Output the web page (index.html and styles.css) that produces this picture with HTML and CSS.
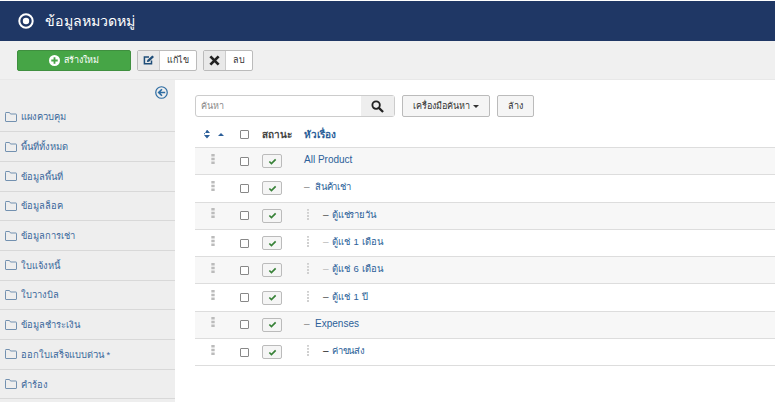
FILE: index.html
```html
<!DOCTYPE html>
<html lang="th">
  <head>
    <meta charset="utf-8" />
    <title>ข้อมูลหมวดหมู่</title>
    <link rel="stylesheet" href="styles.css">
  </head>
  <body>
    <svg width="0" height="0" class="defs">
      <symbol id="folder" viewBox="0 0 12 10"><path d="M.5 1.500V9a.5.5 0 0 0 .5.5h10a.5.5 0 0 0 .5-.5V2.500a.5.5 0 0 0-.5-.5H5.500L4.500.5H1a.5.5 0 0 0-.5.5z" fill="none" stroke="currentColor"/></symbol>
      <symbol id="drag" viewBox="0 0 4 12"><path d="M0 0h4v3H0zM0 4.500h4v3H0zM0 9h4v3H0z" fill="#bbb"/></symbol>
      <symbol id="vdots" viewBox="0 0 2 12"><path d="M0 0h2v2H0zM0 3.300h2v2H0zM0 6.600h2v2H0zM0 9.900h2v2H0z" fill="#ccc"/></symbol>
      <symbol id="check" viewBox="0 0 12 10"><path d="M1.500 5l3 3 6-6" fill="none" stroke="#378137" stroke-width="2.400"/></symbol>
    </svg>

    <header class="title-bar">
      <svg class="title-icon" viewBox="0 0 16 16" width="16" height="16"><circle cx="8" cy="8" r="6.700" fill="none" stroke="#fff" stroke-width="2"/><circle cx="8" cy="8" r="3.200" fill="#fff"/></svg>
      <h1>ข้อมูลหมวดหมู่</h1>
    </header>

    <div class="toolbar">
      <button class="btn-new">
        <svg viewBox="0 0 12 12" width="11" height="11"><circle cx="6" cy="6" r="6" fill="#fff"/><path d="M6 2.500v7M2.500 6h7" stroke="#46a546" stroke-width="2"/></svg>
        สร้างใหม่
      </button>
      <button class="btn-split btn-edit">
        <span class="btn-icon">
          <svg viewBox="0 0 14 12" width="12" height="10"><path d="M10 6.500V10.500H1.500V2.500H7" fill="none" stroke="#1f4e79" stroke-width="1.800"/><path d="M5 6l6-5.500 2 2-6 5.500-2.500.5z" fill="#1f4e79"/></svg>
        </span>
        <span class="btn-label">แก้ไข</span>
      </button>
      <button class="btn-split btn-delete">
        <span class="btn-icon">
          <svg viewBox="0 0 12 12" width="11" height="11"><path d="M1.500 1.500l9 9M10.500 1.500l-9 9" stroke="#222" stroke-width="3"/></svg>
        </span>
        <span class="btn-label">ลบ</span>
      </button>
    </div>

    <div class="main">
      <nav class="sidebar">
        <div class="collapse">
          <svg viewBox="0 0 14 14" width="13" height="13"><circle cx="7" cy="7" r="6.200" fill="none" stroke="#2d6ca2" stroke-width="1.300"/><path d="M7.500 3.500L4 7l3.500 3.500M4 7h7" fill="none" stroke="#2d6ca2" stroke-width="1.800"/></svg>
        </div>
        <a class="nav-item"><svg class="folder"><use href="#folder"/></svg>แผงควบคุม</a>
        <a class="nav-item"><svg class="folder"><use href="#folder"/></svg>พื้นที่ทั้งหมด</a>
        <a class="nav-item"><svg class="folder"><use href="#folder"/></svg>ข้อมูลพื้นที่</a>
        <a class="nav-item"><svg class="folder"><use href="#folder"/></svg>ข้อมูลล็อค</a>
        <a class="nav-item"><svg class="folder"><use href="#folder"/></svg>ข้อมูลการเช่า</a>
        <a class="nav-item"><svg class="folder"><use href="#folder"/></svg>ใบแจ้งหนี้</a>
        <a class="nav-item"><svg class="folder"><use href="#folder"/></svg>ใบวางบิล</a>
        <a class="nav-item"><svg class="folder"><use href="#folder"/></svg>ข้อมูลชำระเงิน</a>
        <a class="nav-item"><svg class="folder"><use href="#folder"/></svg>ออกใบเสร็จแบบด่วน *</a>
        <a class="nav-item"><svg class="folder"><use href="#folder"/></svg>คำร้อง</a>
      </nav>

      <section class="content">
        <div class="filters">
          <div class="search">
            <span class="search-input">ค้นหา</span>
            <span class="search-btn">
              <svg viewBox="0 0 14 14" width="13" height="13"><circle cx="5.500" cy="5.500" r="4" fill="none" stroke="#222" stroke-width="2"/><path d="M8.500 8.500l4.500 4.500" stroke="#222" stroke-width="2.400"/></svg>
            </span>
          </div>
          <button class="btn-plain">เครื่องมือค้นหา <i class="caret"></i></button>
          <button class="btn-plain">ล้าง</button>
        </div>

        <div class="row head">
          <span class="c-order"><i class="sort"></i><i class="sort-up"></i></span>
          <span class="c-check"><i class="box"></i></span>
          <span class="c-status">สถานะ</span>
          <span class="c-title">หัวเรื่อง</span>
        </div>

        <div class="row odd">
          <span class="c-order"><svg class="drag"><use href="#drag"/></svg></span>
          <span class="c-check"><i class="box"></i></span>
          <span class="c-status"><i class="state"><svg><use href="#check"/></svg></i></span>
          <span class="c-title"><a class="latin">All Product</a></span>
        </div>
        <div class="row">
          <span class="c-order"><svg class="drag"><use href="#drag"/></svg></span>
          <span class="c-check"><i class="box"></i></span>
          <span class="c-status"><i class="state"><svg><use href="#check"/></svg></i></span>
          <span class="c-title"><b class="dash">–</b><a>สินค้าเช่า</a></span>
        </div>
        <div class="row odd">
          <span class="c-order"><svg class="drag"><use href="#drag"/></svg></span>
          <span class="c-check"><i class="box"></i></span>
          <span class="c-status"><i class="state"><svg><use href="#check"/></svg></i></span>
          <span class="c-title"><svg class="vdots"><use href="#vdots"/></svg><b class="dash mid">–</b><a>ตู้แช่รายวัน</a></span>
        </div>
        <div class="row">
          <span class="c-order"><svg class="drag"><use href="#drag"/></svg></span>
          <span class="c-check"><i class="box"></i></span>
          <span class="c-status"><i class="state"><svg><use href="#check"/></svg></i></span>
          <span class="c-title"><svg class="vdots"><use href="#vdots"/></svg><b class="dash light">–</b><a class="spaced">ตู้แช่ 1 เดือน</a></span>
        </div>
        <div class="row odd">
          <span class="c-order"><svg class="drag"><use href="#drag"/></svg></span>
          <span class="c-check"><i class="box"></i></span>
          <span class="c-status"><i class="state"><svg><use href="#check"/></svg></i></span>
          <span class="c-title"><svg class="vdots"><use href="#vdots"/></svg><b class="dash light">–</b><a class="spaced">ตู้แช่ 6 เดือน</a></span>
        </div>
        <div class="row">
          <span class="c-order"><svg class="drag"><use href="#drag"/></svg></span>
          <span class="c-check"><i class="box"></i></span>
          <span class="c-status"><i class="state"><svg><use href="#check"/></svg></i></span>
          <span class="c-title"><svg class="vdots"><use href="#vdots"/></svg><b class="dash mid">–</b><a class="spaced">ตู้แช่ 1 ปี</a></span>
        </div>
        <div class="row odd">
          <span class="c-order"><svg class="drag"><use href="#drag"/></svg></span>
          <span class="c-check"><i class="box"></i></span>
          <span class="c-status"><i class="state"><svg><use href="#check"/></svg></i></span>
          <span class="c-title"><b class="dash">–</b><a class="latin">Expenses</a></span>
        </div>
        <div class="row">
          <span class="c-order"><svg class="drag"><use href="#drag"/></svg></span>
          <span class="c-check"><i class="box"></i></span>
          <span class="c-status"><i class="state"><svg><use href="#check"/></svg></i></span>
          <span class="c-title"><svg class="vdots"><use href="#vdots"/></svg><b class="dash dark">–</b><a>ค่าขนส่ง</a></span>
        </div>
      </section>
    </div>
  </body>
</html>
```

FILE: styles.css
```css
html,
body {
  margin: 0;
  height: 100%;
  overflow: hidden;
  background: white;
  font-family: "Liberation Sans", "Noto Sans", sans-serif;
  font-size: 10px;
  color: #333;
}
button {
  font: inherit;
  color: inherit;
  padding: 0;
  cursor: pointer;
}
a {
  color: #2c5f99;
}
.defs {
  position: absolute;
}
.title-bar {
  display: flex;
  align-items: center;
  height: 40px;
  margin-top: 1px;
  padding-left: 18px;
  background: #1f3765;
  color: white;
}
.title-icon {
  margin-right: 11px;
}
h1 {
  margin: 0;
  font-size: 14.200px;
  font-weight: normal;
}
.toolbar {
  display: flex;
  align-items: center;
  gap: 6px;
  height: 39px;
  padding-left: 17px;
  background: #f0f0f0;
  border-bottom: 1px solid #e8e8e8;
  box-sizing: border-box;
}
.btn-new {
  display: flex;
  align-items: center;
  justify-content: center;
  gap: 4px;
  width: 114px;
  height: 21px;
  background: #46a546;
  border: 1px solid #3f8f3f;
  border-radius: 2px;
  color: white;
  font-size: 9px;
}
.btn-split {
  display: flex;
  height: 21px;
  background: white;
  border: 1px solid #bbb;
  border-radius: 2px;
  box-sizing: border-box;
  font-size: 9px;
}
.btn-edit {
  width: 60px;
}
.btn-delete {
  width: 50px;
}
.btn-icon {
  display: flex;
  align-items: center;
  justify-content: center;
  width: 21px;
  background: #e9e9e9;
  border-right: 1px solid #ccc;
}
.btn-label {
  flex: 1;
  display: flex;
  align-items: center;
  justify-content: center;
}
.main {
  display: flex;
  height: 322px;
}
.sidebar {
  width: 175px;
  background: #eee;
  flex: none;
}
.collapse {
  display: flex;
  justify-content: flex-end;
  height: 22.500px;
  padding: 6px 7px 0 0;
  box-sizing: border-box;
}
.nav-item {
  display: flex;
  align-items: center;
  height: 29.700px;
  padding-left: 5px;
  border-bottom: 1px solid #d8d8d8;
  box-sizing: border-box;
  color: #3a689c;
  font-size: 9.400px;
}
.folder {
  width: 12px;
  height: 10px;
  margin-right: 4px;
  color: #7391b0;
}
.content {
  flex: 1;
  padding: 15px 0 0 20px;
  min-width: 0;
}
.filters {
  display: flex;
  gap: 7px;
  height: 22px;
  margin-bottom: 4px;
  font-size: 9px;
}
.search {
  display: flex;
  width: 200px;
  border: 1px solid #ccc;
  border-radius: 3px;
  box-sizing: border-box;
}
.search-input {
  flex: 1;
  padding-left: 5px;
  line-height: 20px;
  color: #888;
}
.search-btn {
  display: flex;
  align-items: center;
  justify-content: center;
  width: 33px;
  background: #eee;
}
.btn-plain {
  padding: 0 10px;
  background: #f5f5f5;
  border: 1px solid #bbb;
  border-radius: 2px;
}
.caret {
  display: inline-block;
  border: 3px solid transparent;
  border-top-color: #333;
  border-bottom: 0;
  vertical-align: middle;
}
.row {
  display: flex;
  align-items: center;
  height: 27.300px;
  border-bottom: 1px solid #ddd;
  box-sizing: border-box;
  font-size: 9.500px;
  letter-spacing: -0.200px;
}
.row.head {
  height: 27px;
  font-size: 10px;
  font-weight: bold;
  letter-spacing: 0;
  color: #2c5f99;
}
.row.odd {
  background: #f7f7f7;
}
.c-order {
  display: flex;
  align-items: center;
  gap: 6px;
  width: 45px;
  padding-left: 9px;
  box-sizing: border-box;
}
.row:not(.head) .c-order {
  padding-left: 16px;
  margin-top: -5px;
}
.c-check {
  display: flex;
  width: 22px;
}
.c-status {
  width: 42px;
}
.head .c-status {
  color: #444;
}
.c-title {
  display: flex;
  align-items: center;
}
.row:not(.head) .c-title {
  margin-top: -3px;
}
.latin {
  font-size: 10px;
  letter-spacing: 0;
}
.spaced {
  word-spacing: 1.500px;
}
.box {
  display: block;
  width: 7px;
  height: 7px;
  background: white;
  border: 1px solid #888;
  border-radius: 1px;
}
.state {
  display: flex;
  align-items: center;
  justify-content: center;
  width: 20px;
  height: 14px;
  background: #f5f5f5;
  border: 1px solid #bbb;
  border-radius: 2px;
  box-sizing: border-box;
}
.state svg {
  width: 9px;
  height: 7px;
}
.drag {
  width: 4px;
  height: 10px;
}
.vdots {
  width: 2px;
  height: 11px;
  margin: 0 14px 0 3px;
}
.dash {
  margin-right: 5.500px;
  font-size: 10px;
  font-weight: normal;
  letter-spacing: 0;
  color: #888;
}
.vdots + .dash {
  margin-right: 3.500px;
}
.dash.light {
  color: #bbb;
}
.dash.mid {
  color: #555;
}
.dash.dark {
  color: #222;
}
.sort {
  width: 6px;
  height: 9px;
  background: #2c5f99;
  clip-path: polygon(50% 0, 100% 40%, 0 40%, 0 60%, 100% 60%, 50% 100%, 0 60%);
}
.sort-up {
  width: 0;
  height: 0;
  border: 3px solid transparent;
  border-bottom-color: #2c5f99;
  border-top: 0;
  margin-left: 2px;
}
```
